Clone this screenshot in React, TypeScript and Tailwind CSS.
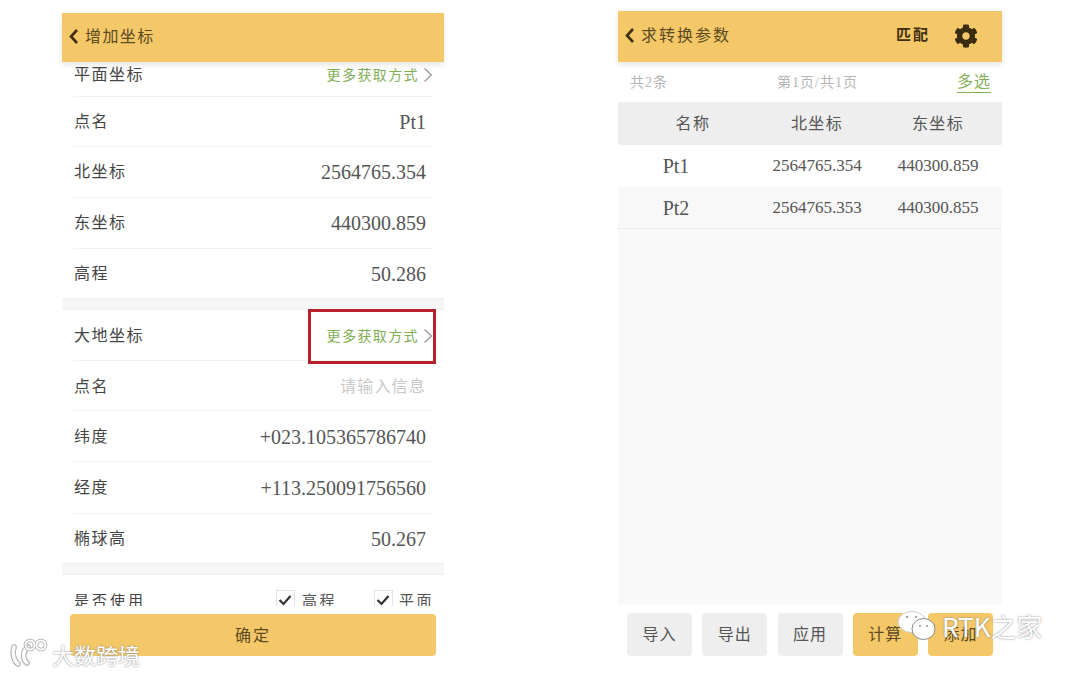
import React from 'react';
import { FaCog } from 'react-icons/fa';

const BackIcon = () => (
  <svg width="11" height="17" viewBox="0 0 11 17" fill="none" className="shrink-0">
    <path d="M9 2L3 8.5L9 15" stroke="#3f2f10" strokeWidth="2.6" />
  </svg>
);

const Chevron = () => (
  <svg width="10" height="16" viewBox="0 0 10 16" fill="none" className="shrink-0">
    <path d="M1.5 1.5L8.5 8L1.5 14.5" stroke="#9a9a9a" strokeWidth="1.3" />
  </svg>
);

const Check = () => (
  <span className="flex h-[19px] w-[19px] shrink-0 items-center justify-center border border-b-0 border-[#e2e2e2]">
    <svg width="14" height="12" viewBox="0 0 14 12" fill="none">
      <path d="M1.5 6L5.5 10L12.5 2" stroke="#333" strokeWidth="2.2" />
    </svg>
  </span>
);

const MoreLink = () => (
  <span className="flex items-center gap-[4px]">
    <span className="text-[14px] tracking-[1.4px] text-[#7fae55]">更多获取方式</span>
    <Chevron />
  </span>
);

interface RowProps {
  label: string;
  value?: string;
  height: string;
  muted?: boolean;
}

const Row: React.FC<RowProps> = ({ label, value, height, muted }) => (
  <div className={`flex shrink-0 items-center justify-between border-b border-[#f1f1f1] pl-px pr-[7px] ${height}`}>
    <span className="text-[16px] tracking-[1.5px] text-[#444]">{label}</span>
    <span className={muted ? 'text-[16px] tracking-[1.2px] text-[#c8c8c8]' : 'text-[20px] text-[#555]'}>{value}</span>
  </div>
);

const Footer: React.FC<{ label: string; gold?: boolean }> = ({ label, gold }) => (
  <div
    className={`flex h-[43px] w-[65px] items-center justify-center rounded-[4px] pt-px text-[16px] tracking-[1px] ${
      gold ? 'bg-[#f4c869] text-[#5b4a22]' : 'bg-[#eeeeee] text-[#555]'
    }`}
  >
    {label}
  </div>
);

const App: React.FC = () => {
  return (
    <div className="relative flex h-[673px] w-[1080px] items-start overflow-hidden bg-white font-['Liberation_Serif','Noto_Sans_CJK_SC',serif]">
      {/* 增加坐标 */}
      <div className="ml-[62px] mt-[13px] flex w-[382px] flex-col">
        <div className="relative z-10 flex h-[49px] items-center gap-[6px] bg-[#f4c869] pb-[2px] pl-[6px] shadow-[0_3px_6px_rgba(0,0,0,0.1)]">
          <BackIcon />
          <span className="text-[16px] tracking-[1.4px] text-[#5b4a22]">增加坐标</span>
        </div>
        <div className="flex h-[552px] flex-col overflow-hidden">
          <div className="flex flex-col px-[11px]">
            <div className="flex h-[35px] shrink-0 items-center justify-between border-b border-[#f1f1f1] pb-[8px] pl-px">
              <span className="text-[16px] tracking-[1.5px] text-[#444]">平面坐标</span>
              <MoreLink />
            </div>
            <Row label="点名" value="Pt1" height="h-[50px]" />
            <Row label="北坐标" value="2564765.354" height="h-[51px]" />
            <Row label="东坐标" value="440300.859" height="h-[51px]" />
            <div className="flex h-[49px] shrink-0 items-center justify-between pl-px pr-[7px]">
              <span className="text-[16px] tracking-[1.5px] text-[#444]">高程</span>
              <span className="text-[20px] text-[#555]">50.286</span>
            </div>
          </div>
          <div className="h-[12px] shrink-0 border-y border-[#efefef] bg-[#f6f6f6]" />
          <div className="flex flex-col px-[11px]">
            <div className="relative flex h-[51px] shrink-0 items-center justify-between border-b border-[#f1f1f1] pl-px pt-[2px]">
              <span className="text-[16px] tracking-[1.5px] text-[#444]">大地坐标</span>
              <MoreLink />
              {/* 红框标注 */}
              <div className="absolute left-[235px] top-[-1px] h-[55px] w-[128px] border-[3px] border-[#b8202c]" />
            </div>
            <Row label="点名" value="请输入信息" height="h-[50px] pt-[2px]" muted />
            <Row label="纬度" value="+023.105365786740" height="h-[51px] pt-[2px]" />
            <Row label="经度" value="+113.250091756560" height="h-[52px]" />
            <div className="flex h-[49px] shrink-0 items-center justify-between pl-px pr-[7px]">
              <span className="text-[16px] tracking-[1.5px] text-[#444]">椭球高</span>
              <span className="text-[20px] text-[#555]">50.267</span>
            </div>
          </div>
          <div className="h-[12px] shrink-0 border-y border-[#efefef] bg-[#f6f6f6]" />
          <div className="flex h-[31px] shrink-0 items-start justify-between overflow-hidden pl-[12px] pr-[10px] pt-[15px]">
            <span className="mt-[2px] text-[15px] leading-[18px] tracking-[3px] text-[#444]">是否使用</span>
            <div className="flex items-start">
              <Check />
              <span className="ml-[7px] mt-[2px] text-[15px] leading-[18px] tracking-[2.5px] text-[#555]">高程</span>
              <span className="ml-[37px]"><Check /></span>
              <span className="ml-[6px] mt-[2px] text-[15px] leading-[18px] tracking-[2.5px] text-[#555]">平面</span>
            </div>
          </div>
        </div>
        <div className="px-[8px]">
          <div className="flex h-[42px] items-center justify-center rounded-[4px] bg-[#f4c869] pt-px text-[16px] tracking-[2px] text-[#5b4a22]">
            确定
          </div>
        </div>
      </div>

      {/* 求转换参数 */}
      <div className="ml-[174px] mt-[11px] flex w-[384px] flex-col">
        <div className="relative z-10 flex h-[51px] items-center justify-between bg-[#f4c869] pb-[2px] pl-[6px] pr-[24px] shadow-[0_3px_6px_rgba(0,0,0,0.1)]">
          <div className="flex items-center gap-[6px]">
            <BackIcon />
            <span className="text-[16px] tracking-[2px] text-[#5b4a22]">求转换参数</span>
          </div>
          <div className="flex items-center gap-[24px]">
            <span className="text-[15px] font-bold tracking-[2px] text-[#3f2f10]">匹配</span>
            <FaCog size={24} color="#3a2c10" />
          </div>
        </div>
        <div className="flex h-[40px] items-center justify-between pl-[12px] pr-[11px]">
          <span className="text-[14px] tracking-[1px] text-[#b5b5b5]">共2条</span>
          <span className="ml-[10px] text-[14px] tracking-[1px] text-[#b5b5b5]">第1页/共1页</span>
          <span className="border-b border-[#7fae55] text-[16px] leading-[20px] tracking-[1px] text-[#7fae55]">多选</span>
        </div>
        <div className="grid h-[43px] grid-cols-[128px_133px_123px] items-center bg-[#eeeeee] text-center text-[16px] tracking-[1.4px] text-[#555]">
          <span className="pl-[22px]">名称</span>
          <span className="pl-[9px]">北坐标</span>
          <span className="pr-[5px]">东坐标</span>
        </div>
        <div className="grid h-[42px] grid-cols-[128px_133px_123px] items-center text-center text-[#555]">
          <span className="pr-[12px] text-[20px]">Pt1</span>
          <span className="pl-[9px] text-[17px]">2564765.354</span>
          <span className="pr-[5px] text-[17px]">440300.859</span>
        </div>
        <div className="grid h-[42px] grid-cols-[128px_133px_123px] items-center border-b border-[#ececec] bg-[#f8f8f8] pt-px text-center text-[#555]">
          <span className="pr-[12px] text-[20px]">Pt2</span>
          <span className="pl-[9px] text-[17px]">2564765.353</span>
          <span className="pr-[5px] text-[17px]">440300.855</span>
        </div>
        <div className="h-[376px] bg-[#f9f9f9]" />
        <div className="flex justify-between pl-[9px] pr-[9px] pt-[8px]">
          <Footer label="导入" />
          <Footer label="导出" />
          <Footer label="应用" />
          <Footer label="计算" gold />
          <Footer label="添加" gold />
        </div>
      </div>

      {/* 水印 */}
      <div className="absolute left-[10px] top-[638px] flex items-start gap-[4px]">
        <svg width="38" height="29" viewBox="0 0 38 29" fill="none">
          <g stroke="#aaa" strokeWidth="5.5" strokeLinecap="round">
            <path d="M4 9C2 16 4 23 8 26" />
            <path d="M18 9C13 12 12 21 17 25" />
          </g>
          <g stroke="#fff" strokeWidth="3.5" strokeLinecap="round">
            <path d="M4 9C2 16 4 23 8 26" />
            <path d="M18 9C13 12 12 21 17 25" />
          </g>
          <circle cx="20" cy="7" r="4.5" stroke="#aaa" strokeWidth="3.6" />
          <circle cx="31" cy="7" r="4.5" stroke="#aaa" strokeWidth="3.6" />
          <circle cx="20" cy="7" r="4.5" stroke="#fff" strokeWidth="2" />
          <circle cx="31" cy="7" r="4.5" stroke="#fff" strokeWidth="2" />
        </svg>
        <span className="mt-[5px] font-['Noto_Sans_CJK_SC',sans-serif] text-[22px] leading-none text-white [text-shadow:0_0_2px_#777]">大数跨境</span>
      </div>
      <div className="absolute left-[895px] top-[610px] flex items-center gap-[1px]">
        <svg width="46" height="32" viewBox="0 0 46 32" fill="none">
          <ellipse cx="17" cy="12" rx="14" ry="10.5" fill="#fff" stroke="#ccc" />
          <ellipse cx="28.5" cy="19" rx="11.5" ry="10.5" fill="#fff" stroke="#888" />
          <circle cx="12" cy="7" r="1.3" fill="#aaa" />
          <circle cx="21" cy="7" r="1.3" fill="#aaa" />
          <circle cx="25" cy="16" r="1.1" fill="#999" />
          <circle cx="32" cy="16" r="1.1" fill="#999" />
        </svg>
        <span className="font-['Noto_Sans_CJK_SC',sans-serif] text-[26px] leading-none text-white [text-shadow:0_0_2px_#777]">RTK之家</span>
      </div>
    </div>
  );
};

export default App;
